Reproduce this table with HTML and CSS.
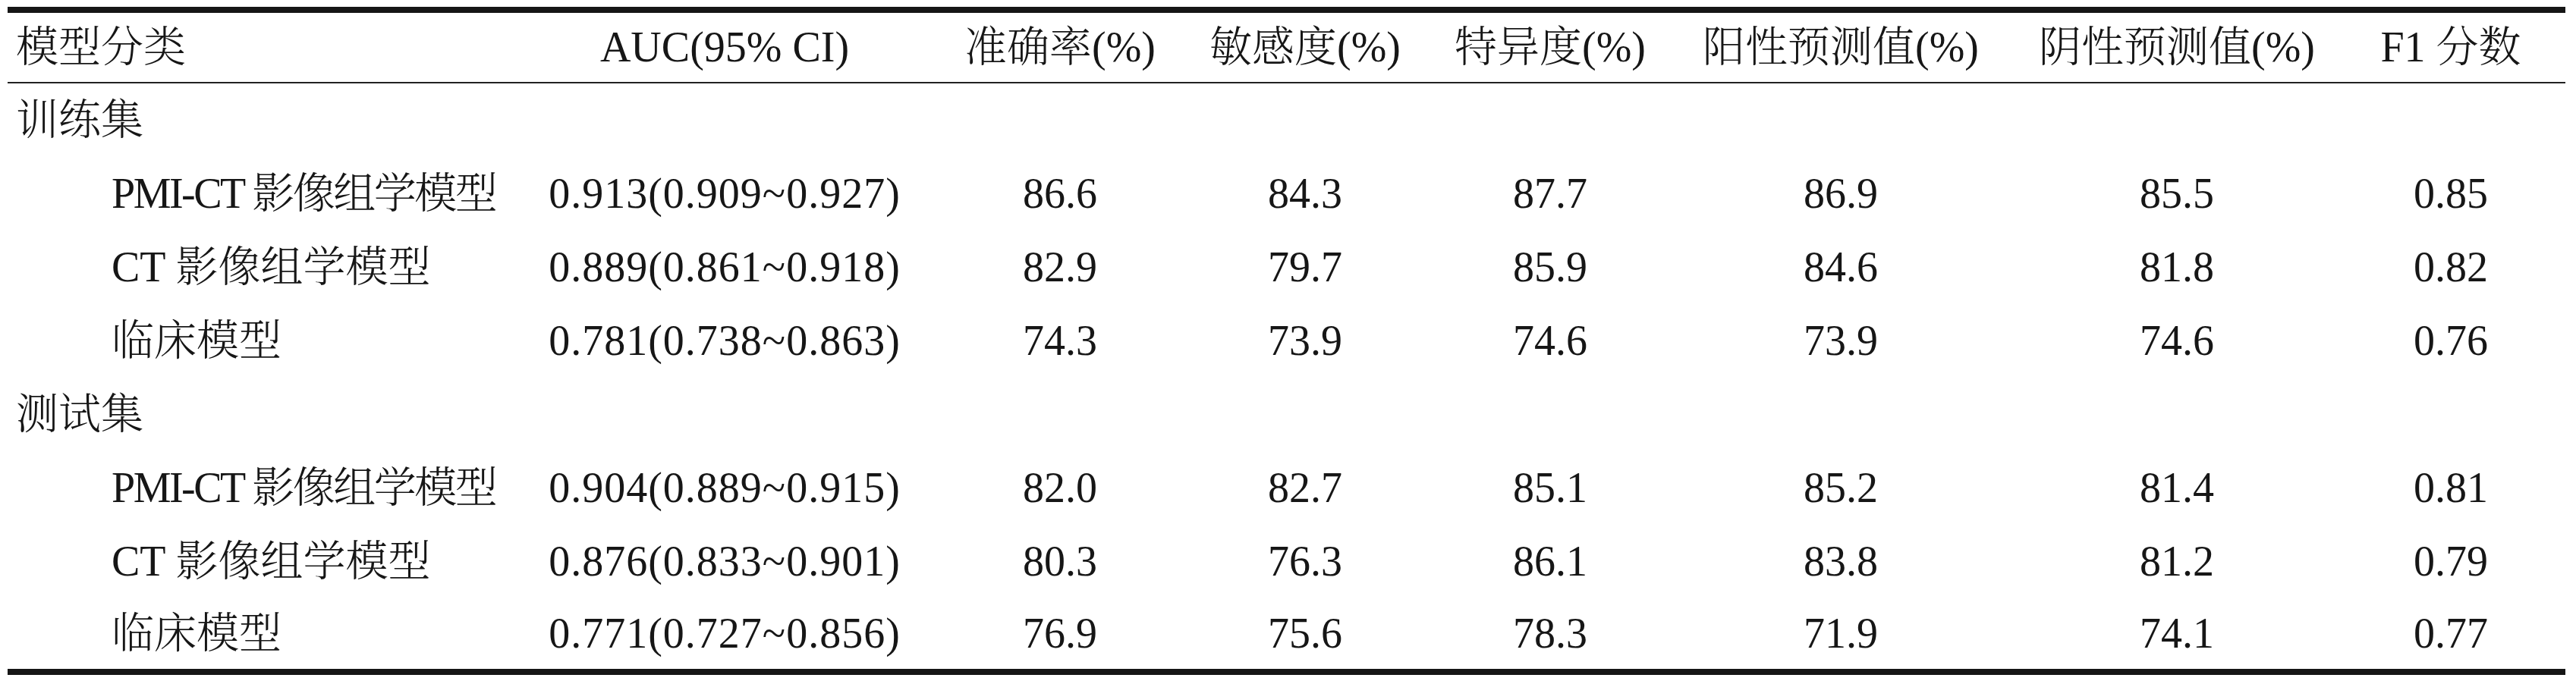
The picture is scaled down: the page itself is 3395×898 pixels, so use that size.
FILE: index.html
```html
<!DOCTYPE html>
<html lang="zh-CN">
<head>
<meta charset="utf-8">
<title>模型性能比较</title>
<link rel="stylesheet" href="styles.css">
</head>
<body>
<div class="table">
  <div class="row head">
    <div class="cell label">模型分类</div>
    <div class="cell">AUC(95% CI)</div>
    <div class="cell">准确率(%)</div>
    <div class="cell">敏感度(%)</div>
    <div class="cell">特异度(%)</div>
    <div class="cell">阳性预测值(%)</div>
    <div class="cell">阴性预测值(%)</div>
    <div class="cell">F1 分数</div>
  </div>
  <div class="row">
    <div class="cell label">训练集</div>
  </div>
  <div class="row">
    <div class="cell label sub tight">PMI-CT 影像组学模型</div>
    <div class="cell ci">0.913(0.909~0.927)</div>
    <div class="cell">86.6</div>
    <div class="cell">84.3</div>
    <div class="cell">87.7</div>
    <div class="cell">86.9</div>
    <div class="cell">85.5</div>
    <div class="cell">0.85</div>
  </div>
  <div class="row">
    <div class="cell label sub">CT 影像组学模型</div>
    <div class="cell ci">0.889(0.861~0.918)</div>
    <div class="cell">82.9</div>
    <div class="cell">79.7</div>
    <div class="cell">85.9</div>
    <div class="cell">84.6</div>
    <div class="cell">81.8</div>
    <div class="cell">0.82</div>
  </div>
  <div class="row">
    <div class="cell label sub">临床模型</div>
    <div class="cell ci">0.781(0.738~0.863)</div>
    <div class="cell">74.3</div>
    <div class="cell">73.9</div>
    <div class="cell">74.6</div>
    <div class="cell">73.9</div>
    <div class="cell">74.6</div>
    <div class="cell">0.76</div>
  </div>
  <div class="row">
    <div class="cell label">测试集</div>
  </div>
  <div class="row">
    <div class="cell label sub tight">PMI-CT 影像组学模型</div>
    <div class="cell ci">0.904(0.889~0.915)</div>
    <div class="cell">82.0</div>
    <div class="cell">82.7</div>
    <div class="cell">85.1</div>
    <div class="cell">85.2</div>
    <div class="cell">81.4</div>
    <div class="cell">0.81</div>
  </div>
  <div class="row">
    <div class="cell label sub">CT 影像组学模型</div>
    <div class="cell ci">0.876(0.833~0.901)</div>
    <div class="cell">80.3</div>
    <div class="cell">76.3</div>
    <div class="cell">86.1</div>
    <div class="cell">83.8</div>
    <div class="cell">81.2</div>
    <div class="cell">0.79</div>
  </div>
  <div class="row last">
    <div class="cell label sub">临床模型</div>
    <div class="cell ci">0.771(0.727~0.856)</div>
    <div class="cell">76.9</div>
    <div class="cell">75.6</div>
    <div class="cell">78.3</div>
    <div class="cell">71.9</div>
    <div class="cell">74.1</div>
    <div class="cell">0.77</div>
  </div>
</div>
</body>
</html>
```
FILE: styles.css
```css
html, body {
  margin: 0;
  padding: 0;
  background: #ffffff;
}

body {
  padding: 9px 14px 0 10px;
  font-family: "Liberation Serif", "Noto Serif CJK SC", "Noto Sans CJK SC", serif;
  font-size: 56px;
  font-weight: 300;
  color: #161616;
}

.table {
  width: 3371px;
  border-top: 8px solid #161616;
  border-bottom: 8px solid #161616;
}

.row {
  display: grid;
  grid-template-columns: 690px 510px 374px 272px 374px 392px 494px 228px;
  align-items: center;
  height: 97px;
  padding-right: 37px;
}

.head {
  height: 91px;
  border-bottom: 2px solid #222222;
}

.last {
  height: 93px;
}

.cell {
  text-align: center;
  white-space: nowrap;
  line-height: 1.2;
}

.label {
  text-align: left;
  padding-left: 11px;
}

.sub {
  padding-left: 137px;
}

.tight {
  letter-spacing: -2.5px;
}

.ci {
  letter-spacing: 1px;
}
```
